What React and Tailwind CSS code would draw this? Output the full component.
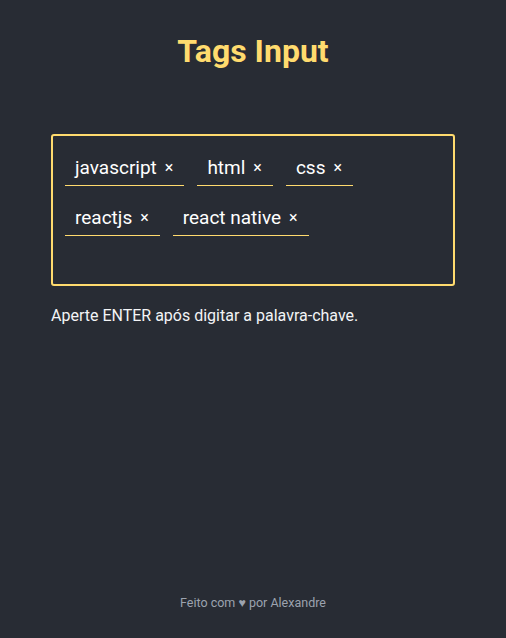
import { useState } from 'react'

const START_TAGS = ['javascript', 'html', 'css', 'reactjs', 'react native']

export default function App() {
  const [tags, setTags] = useState(START_TAGS)
  const [value, setValue] = useState('')

  function handleKey(e) {
    if (e.key === 'Enter' && value.trim()) {
      setTags((prev) => [...prev, value.trim()])
      setValue('')
    }
  }

  function removeTag(i) {
    setTags((prev) => prev.filter((_, idx) => idx !== i))
  }

  return (
    <div className="min-h-screen flex flex-col bg-[#282c34] text-white font-['Roboto',sans-serif]">
      <h1 className="pt-[30px] text-center text-[32px] leading-[42px] font-bold text-[#ffdb6e]">
        Tags Input
      </h1>

      <main className="flex-1 px-[51px] pt-[62px]">
        <div className="flex flex-wrap gap-x-[13px] gap-y-[14px] px-[12px] pt-[14px] pb-[12px] border-2 border-[#ffdb6e] rounded-[3px]">
          {tags.map((t, i) => (
            <div
              key={t + i}
              className="flex items-center h-9 pl-[10px] pr-[11px] border-b border-[#ffdb6e]"
            >
              <span className="text-[19px] leading-none">{t}</span>
              <button
                onClick={() => removeTag(i)}
                className="ml-[8px] text-[16px] leading-none text-white"
              >
                ×
              </button>
            </div>
          ))}
          <input
            value={value}
            onChange={(e) => setValue(e.target.value)}
            onKeyDown={handleKey}
            className="w-full h-[22px] bg-transparent outline-none text-[16px] text-white"
          />
        </div>
        <p className="mt-[18px] text-[16px] text-[#f3f4f6]">
          Aperte ENTER após digitar a palavra-chave.
        </p>
      </main>

      <footer className="pb-[25px] text-center text-[12.5px] text-[#9ca3af]">
        Feito com ♥ por Alexandre
      </footer>
    </div>
  )
}
